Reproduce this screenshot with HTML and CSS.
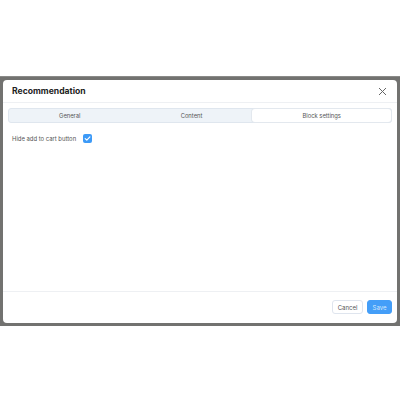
FILE: index.html
```html
<!DOCTYPE html>
<html>
<head>
<meta charset="utf-8">
<link rel="stylesheet" href="styles.css">
</head>
<body>
<div class="top"></div>
<div class="overlay">
  <div class="modal">
    <div class="header">
      <div class="title">Recommendation</div>
      <svg class="close" width="9" height="9" viewBox="0 0 9 9"><path d="M1 1L8 8M8 1L1 8" stroke="#666" stroke-width="1" fill="none"/></svg>
    </div>
    <div class="tabs">
      <div class="tab">General</div>
      <div class="tab">Content</div>
      <div class="tab active">Block settings</div>
    </div>
    <div class="body">
      <div class="row">
        <span class="label">Hide add to cart button</span>
        <span class="check"><svg width="9" height="9" viewBox="0 0 9 9"><path d="M2.2 4.6L3.8 6.1L6.9 2.9" stroke="#fff" stroke-width="1.2" fill="none" stroke-linecap="round" stroke-linejoin="round"/></svg></span>
      </div>
    </div>
    <div class="footer">
      <button class="btn cancel">Cancel</button>
      <button class="btn save">Save</button>
    </div>
  </div>
</div>
</body>
</html>
```
FILE: styles.css
```css
html, body { margin: 0; padding: 0; background: #fff; }
body { font-family: Inter, "Noto Sans", sans-serif; color: #333; width: 400px; height: 400px; overflow: hidden; }
.top { height: 76px; }
.overlay {
  height: 243px;
  background: #727270;
  padding: 3px 3px 3px 3px;
  border-top: 1px solid #8a8a88;
}
.modal {
  height: 100%;
  background: #fff;
  border-radius: 4px;
  display: flex;
  flex-direction: column;
}
.header {
  height: 22px;
  display: flex;
  align-items: center;
  justify-content: space-between;
  padding: 0 10px 0 9px;
  border-bottom: 1px solid #eef0f3;
}
.title { font-size: 8.6px; font-weight: 700; color: #222; }
.close { display: block; }
.tabs {
  margin: 5px 5px 0 5px;
  height: 13px;
  display: flex;
  background: #eef3f8;
  border: 1px solid #dfe6ee;
  border-radius: 3px;
}
.tab {
  flex: 1 1 auto;
  font-size: 5.8px;
  color: #555;
  display: flex;
  align-items: center;
  justify-content: center;
  border-radius: 3px;
}
.tab.active { background: #fff; box-shadow: 0 0 0 1px #e3e8ee; }
.body { flex: 1; padding: 11px 9px; }
.row { display: flex; align-items: center; gap: 7px; }
.label { font-size: 5.9px; color: #555; }
.check {
  width: 9px; height: 9px;
  background: #3d9af7;
  border-radius: 2px;
  display: flex;
}
.footer {
  border-top: 1px solid #eef0f3;
  display: flex;
  justify-content: flex-end;
  gap: 4px;
  padding: 8px 5px 9px 0;
}
.btn {
  font-family: inherit;
  font-size: 6px;
  height: 14px;
  padding: 0;
  border-radius: 3px;
  cursor: pointer;
}
.cancel { width: 31px; background: #fff; border: 1px solid #dfe5ee; color: #555; }
.save { width: 25px; background: #449ef8; border: 1px solid #449ef8; color: #d6e9fd; }
```
